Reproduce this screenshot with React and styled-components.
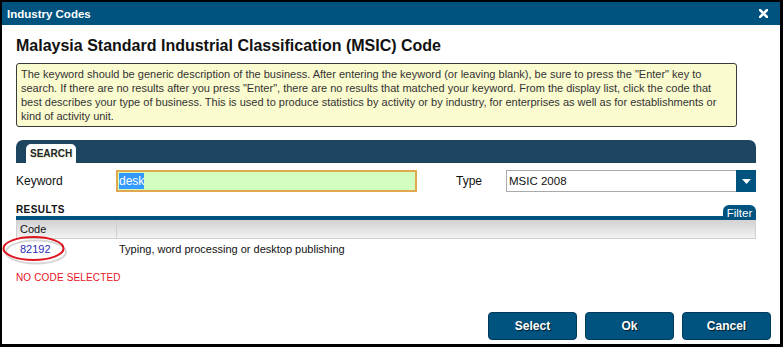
import React from 'react';
import styled, { createGlobalStyle } from 'styled-components';

const GlobalStyle = createGlobalStyle`
  html, body {
    margin: 0;
    padding: 0;
    background: #000;
  }
  body {
    font-family: "Liberation Sans", Arial, sans-serif;
    font-size: 11px;
    color: #000;
  }
`;

const Dialog = styled.div`
  width: 778px;
  height: 342px;
  margin: 2px 0 0 2px;
  background: #fff;
  display: flex;
  flex-direction: column;
  position: relative;
`;

const TitleBar = styled.div`
  height: 23px;
  background: #00527f;
  display: flex;
  align-items: center;
  justify-content: space-between;
  padding: 0 12px 0 5px;
  color: #fff;
  font-size: 11.5px;
  font-weight: bold;
`;

const Body = styled.div`
  flex: 1;
  display: flex;
  flex-direction: column;
  padding: 0 9px 4px 14px;
`;

const Heading = styled.h1`
  margin: 10px 0 0;
  font-size: 16px;
  line-height: 22px;
  font-weight: bold;
  color: #111;
`;

const Notice = styled.div`
  margin-top: 6px;
  width: 711px;
  padding: 3px 4px;
  border: 1px solid #3a3a3a;
  border-radius: 3px;
  background: #fbfbd0;
  color: #333;
  font-size: 11px;
  line-height: 14px;
  white-space: nowrap;
`;

const Panel = styled.div`
  width: 740px;
  margin-top: 13px;
`;

const PanelBar = styled.div`
  height: 23px;
  background: #1e4560;
  border-radius: 7px 7px 0 0;
  display: flex;
  align-items: flex-end;
  padding-left: 10px;
`;

const Tab = styled.div`
  height: 19px;
  padding: 0 4px;
  background: #fff;
  border-radius: 5px 5px 0 0;
  display: flex;
  align-items: center;
  font-size: 10px;
  font-weight: bold;
  color: #1a2530;
  text-shadow: 1px 1px 0 #f0eec0;
`;

const FormRow = styled.div`
  display: flex;
  align-items: center;
  margin-top: 7px;
  height: 22px;
`;

const Label = styled.label`
  width: ${p => p.$w}px;
  font-size: 12px;
  color: #111;
`;

const KeywordInput = styled.div`
  box-sizing: border-box;
  width: 301px;
  height: 22px;
  border: 2px solid #e2a850;
  background: #d2ffc0;
  display: flex;
  align-items: center;
  padding-left: 1px;
  margin-right: 39px;
  font-size: 12px;
`;

const Highlight = styled.span`
  background: #3399ff;
  color: #fff;
  padding: 1px 0;
`;

const Select = styled.div`
  box-sizing: border-box;
  flex: 1;
  height: 22px;
  display: flex;
  border: 1px solid #aaa;
  border-right: none;
`;

const SelectValue = styled.div`
  flex: 1;
  display: flex;
  align-items: center;
  padding-left: 2px;
  font-size: 11.5px;
  color: #111;
`;

const SelectButton = styled.div`
  width: 20px;
  margin: -1px 0;
  background: #00527f;
  display: flex;
  align-items: center;
  justify-content: center;
`;

const ResultsHead = styled.div`
  margin-top: 13px;
  display: flex;
  align-items: flex-end;
  justify-content: space-between;
  height: 11px;
`;

const SectionLabel = styled.div`
  font-size: 10px;
  font-weight: bold;
  letter-spacing: 0.4px;
  color: #111;
  line-height: 11px;
  padding-bottom: 1px;
`;

const FilterTab = styled.div`
  width: 33px;
  height: 15px;
  margin-bottom: -4px;
  background: #00527f;
  border-radius: 6px 6px 0 0;
  color: #fff;
  font-size: 11.5px;
  text-align: center;
  line-height: 16px;
  position: relative;
  z-index: 1;
`;

const Grid = styled.div`
  border-top: 4px solid #00527f;
  position: relative;
`;

const Row = styled.div`
  display: grid;
  grid-template-columns: 100px 1fr;
  height: ${p => p.$h}px;
  align-items: center;
  ${p => p.$head && `
    background: linear-gradient(#d2d2d2, #f2f2f2);
    border: 1px solid #cfcfcf;
    border-top: none;
    box-sizing: border-box;
  `}
`;

const Cell = styled.div`
  height: 100%;
  display: flex;
  align-items: center;
  padding-left: ${p => p.$pad}px;
  font-size: 11px;
  color: #111;
  ${p => p.$divider && 'border-right: 1px solid #cfcfcf;'}
`;

const CodeLink = styled.a`
  color: #2a2ab0;
  text-decoration: none;
`;

const Ellipse = styled.svg`
  position: absolute;
  left: -14px;
  top: 15px;
  pointer-events: none;
`;

const Status = styled.div`
  margin-top: 14px;
  color: #e8101c;
  font-size: 10px;
  letter-spacing: 0.15px;
`;

const Buttons = styled.div`
  margin-top: auto;
  display: flex;
  justify-content: flex-end;
  gap: 8px;
`;

const Button = styled.button`
  width: 89px;
  height: 28px;
  border: 1px solid #003b5c;
  border-radius: 4px;
  background: #00527f;
  color: #fff;
  font-family: "Liberation Sans", Arial, sans-serif;
  font-size: 12px;
  font-weight: bold;
  text-shadow: 1px 1px 1px #001a2a;
  cursor: pointer;
`;

const CloseIcon = () => (
  <svg width="9" height="9" viewBox="0 0 9 9">
    <path d="M1 1 L8 8 M8 1 L1 8" stroke="#fff" strokeWidth="2.6" strokeLinecap="square" />
  </svg>
);

const Caret = () => (
  <svg width="9" height="5" viewBox="0 0 9 5">
    <path d="M0 0 H9 L4.5 5 Z" fill="#fff" />
  </svg>
);

const noticeLines = [
  'The keyword should be generic description of the business. After entering the keyword (or leaving blank), be sure to press the "Enter" key to',
  'search. If there are no results after you press "Enter", there are no results that matched your keyword. From the display list, click the code that',
  'best describes your type of business. This is used to produce statistics by activity or by industry, for enterprises as well as for establishments or',
  'kind of activity unit.'
];

export default function App() {
  return (
    <>
      <GlobalStyle />
      <Dialog>
        <TitleBar>
          <span>Industry Codes</span>
          <CloseIcon />
        </TitleBar>
        <Body>
          <Heading>Malaysia Standard Industrial Classification (MSIC) Code</Heading>
          <Notice>
            {noticeLines.map((line, i) => (
              <div key={i}>{line}</div>
            ))}
          </Notice>

          <Panel>
            <PanelBar>
              <Tab>SEARCH</Tab>
            </PanelBar>
            <FormRow>
              <Label $w={100}>Keyword</Label>
              <KeywordInput>
                <Highlight>desk</Highlight>
              </KeywordInput>
              <Label $w={50}>Type</Label>
              <Select>
                <SelectValue>MSIC 2008</SelectValue>
                <SelectButton>
                  <Caret />
                </SelectButton>
              </Select>
            </FormRow>

            <ResultsHead>
              <SectionLabel>RESULTS</SectionLabel>
              <FilterTab>Filter</FilterTab>
            </ResultsHead>
            <Grid>
              <Row $head $h={19}>
                <Cell $pad={3} $divider>Code</Cell>
                <Cell />
              </Row>
              <Row $h={19}>
                <Cell $pad={4}>
                  <CodeLink href="#">82192</CodeLink>
                </Cell>
                <Cell $pad={3}>Typing, word processing or desktop publishing</Cell>
              </Row>
              <Ellipse width="66" height="30" viewBox="0 0 66 30">
                <ellipse cx="32.5" cy="15" rx="30" ry="11.5" fill="none" stroke="#bbb" strokeWidth="2" opacity="0.6" transform="translate(1.5 2)" />
                <ellipse cx="31.5" cy="13.5" rx="30" ry="11.5" fill="none" stroke="#e0141e" strokeWidth="2" />
              </Ellipse>
            </Grid>
          </Panel>

          <Status>NO CODE SELECTED</Status>

          <Buttons>
            <Button>Select</Button>
            <Button>Ok</Button>
            <Button>Cancel</Button>
          </Buttons>
        </Body>
      </Dialog>
    </>
  );
}
